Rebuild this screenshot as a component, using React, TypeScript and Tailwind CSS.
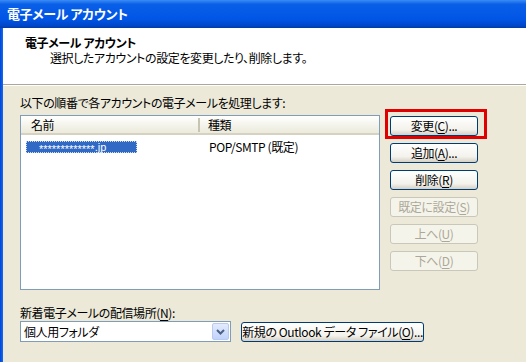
import type { ReactNode } from "react";

const font = "font-['Noto_Sans_CJK_JP','Noto_Sans',sans-serif] [font-feature-settings:'palt']";

function XpButton({ children, disabled, className = "" }: { children: ReactNode; disabled?: boolean; className?: string }) {
  return (
    <div
      className={`flex h-[20px] items-center justify-center whitespace-nowrap rounded-[3px] border text-[12px] leading-none ${
        disabled
          ? "border-[#c9c7ba] bg-[#f5f4ea] text-[#aca899]"
          : "border-[#003c74] bg-[linear-gradient(#ffffff,#f3f2ec_70%,#d6d0c5)] text-black"
      } ${className}`}
    >
      {children}
    </div>
  );
}

const U = ({ children }: { children: ReactNode }) => <span className="underline underline-offset-2">{children}</span>;

export default function App() {
  return (
    <div className={`flex h-[362px] w-[526px] flex-col overflow-hidden bg-[#ece9d8] tracking-[-0.4px] ${font}`}>
      <div className="flex h-[28px] shrink-0 items-center bg-[linear-gradient(#3b8cf5,#0a5fe8_15%,#0055e5_70%,#0046c8_92%,#003aa8)] pl-[7px] text-[13px] font-bold text-white">
        電子メール アカウント
      </div>
      <div className="flex flex-1">
        <div className="w-[3px] bg-[linear-gradient(90deg,#0046d8,#166af0)]" />
        <div className="flex flex-1 flex-col">
          <div className="h-[57px] border-b border-[#aca899] bg-white pl-[22px] pt-[8px] text-[12px] leading-[14px]">
            <div className="font-bold">電子メール アカウント</div>
            <div className="pl-[25px] pt-[1px]">選択したアカウントの設定を変更したり、削除します。</div>
          </div>
          <div className="border-t border-white pl-[17px] pt-[10px] text-[12px] leading-[14px] text-black">
            <div>以下の順番で各アカウントの電子メールを処理します:</div>
            <div className="mt-[5px] flex">
              <div className="h-[175px] w-[360px] border border-[#7f9db9] bg-white">
                <div className="flex h-[19px] items-center border-b-2 border-[#d6d2c2] bg-[linear-gradient(#ffffff,#ebeadb)]">
                  <div className="w-[179px] border-r-2 border-[#c7c5b2] pl-[10px]">名前</div>
                  <div className="pl-[8px]">種類</div>
                </div>
                <div className="mt-[5px] flex h-[13px] items-center">
                  <div className="ml-[5px] flex h-[12px] w-[111px] items-center whitespace-nowrap border border-dotted border-[#d0dcf3] bg-[#316ac5] pl-[12px] font-['Liberation_Sans',sans-serif] text-[11px] tracking-[0px] text-white">
                    <span className="translate-y-[2px]">*************</span>.jp
                  </div>
                  <div className="ml-[72px] whitespace-nowrap">POP/SMTP (既定)</div>
                </div>
              </div>
              <div className="ml-[10px] mt-[1px] flex w-[88px] flex-col gap-[7px]">
                <div className="relative">
                  <XpButton>変更(<U>C</U>)...</XpButton>
                  <div className="absolute left-[-5px] top-[-7px] h-[30px] w-[102px] border-[3px] border-[#e00000]" />
                </div>
                <XpButton>追加(<U>A</U>)...</XpButton>
                <XpButton>削除(<U>R</U>)</XpButton>
                <XpButton disabled>既定に設定(<U>S</U>)</XpButton>
                <XpButton disabled>上へ(<U>U</U>)</XpButton>
                <XpButton disabled>下へ(<U>D</U>)</XpButton>
              </div>
            </div>
            <div className="mt-[16px]">新着電子メールの配信場所(<U>N</U>):</div>
            <div className="mt-[1px] flex items-center">
              <div className="flex h-[21px] w-[211px] items-center justify-between border border-[#7f9db9] bg-white pl-[3px]">
                <span>個人用フォルダ</span>
                <div className="mr-[1px] flex h-[17px] w-[17px] items-center justify-center rounded-[2px] border border-[#b9c9ef] bg-[linear-gradient(#e3ebfd,#c1d3fb)]">
                  <svg width="9" height="6" viewBox="0 0 9 6">
                    <path d="M1 1 L4.5 4.5 L8 1" fill="none" stroke="#4d6185" strokeWidth="2" />
                  </svg>
                </div>
              </div>
              <XpButton className="ml-[10px] w-[183px] tracking-[-0.4px]">新規の Outlook データ ファイル(<U>O</U>)...</XpButton>
            </div>
          </div>
        </div>
      </div>
    </div>
  );
}
